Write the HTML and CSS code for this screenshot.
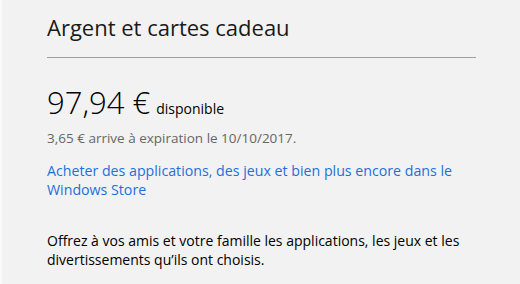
FILE: index.html
```html
<!DOCTYPE html>
<html lang="fr">
<head>
<meta charset="utf-8">
<link rel="stylesheet" href="styles.css">
</head>
<body>
<main class="page">
  <h1 class="title">Argent et cartes cadeau</h1>
  <hr class="rule">
  <div class="balance">
    <span class="amount">97,94 €</span>
    <span class="avail">disponible</span>
  </div>
  <p class="expire">3,65 € arrive à expiration le 10/10/2017.</p>
  <a class="link" href="#">Acheter des applications, des jeux et bien plus encore dans le Windows Store</a>
  <p class="body">Offrez à vos amis et votre famille les applications, les jeux et les divertissements qu’ils ont choisis.</p>
</main>
</body>
</html>
```
FILE: styles.css
```css
html, body {
  margin: 0;
  padding: 0;
  background: #f2f2f2;
}
.page {
  box-sizing: border-box;
  width: 520px;
  height: 284px;
  border-left: 2px solid #fafafa;
  padding: 0 44px 0 45px;
  font-family: "Open Sans", "Noto Sans", sans-serif;
  color: #000;
  overflow: hidden;
}
.title {
  margin: 0;
  padding-top: 12px;
  font-size: 22px;
  font-weight: 400;
  line-height: 30px;
  color: #1a1a1a;
}
.rule {
  margin: 15px 0 0;
  border: 0;
  height: 1px;
  background: #a0a0a0;
}
.balance {
  margin-top: 26px;
  display: flex;
  align-items: baseline;
  gap: 6px;
}
.amount {
  font-size: 31px;
  font-weight: 300;
  line-height: 36px;
}
.avail {
  font-size: 14px;
}
.expire {
  margin: 8px 0 0;
  font-size: 13.5px;
  line-height: 20px;
  color: #666;
}
.link {
  display: block;
  margin-top: 13px;
  font-size: 14.2px;
  line-height: 19px;
  color: #1e6fd9;
  text-decoration: none;
}
.body {
  margin: 33px 0 0;
  font-size: 14px;
  line-height: 18.5px;
  color: #000;
}
```
